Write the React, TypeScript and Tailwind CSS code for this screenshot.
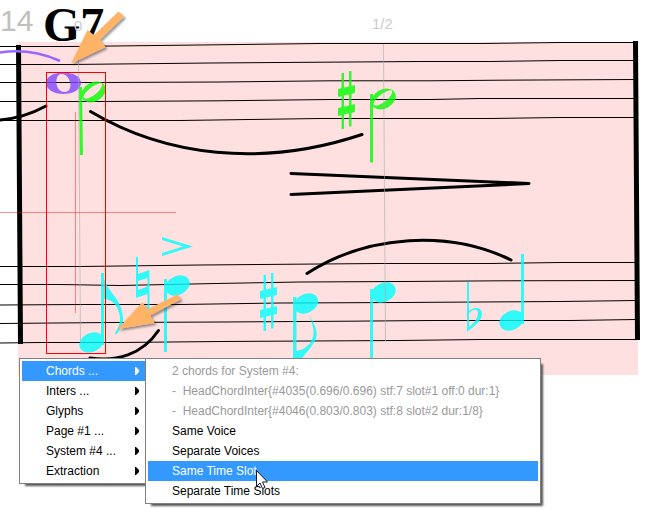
import React from "react";

type StaffLine = string;

const staffLines: StaffLine[] = [
  "M0 46.5H70L200 45L320 43.5H480L560 42.5H636",
  "M0 64.5H70L210 63L350 62L420 61.5H490L560 60.5H636",
  "M0 82.5H100L220 82L330 80.8L430 80.8L500 80.2L636 79.5",
  "M0 101.5H100L220 100.8L330 99.5H430L480 98.5H636",
  "M0 120.5H180L320 118.5H490L560 117.5H636",
  "M0 266.5H80L200 265L380 263.5H490L560 262.5H636",
  "M0 284.5H60L120 285.5L216 283.5L300 282L400 281.5L500 280.8L636 280.5",
  "M0 305L80 304.5H180L280 303L400 302.5L560 301.5L636 300.5",
  "M0 323.5L110 322.5L220 322L350 321.2L430 320.5H570L636 319.5",
  "M0 343L40 342.5H120L220 341.5L400 340.5L480 339.5H636",
];

const curves = [
  "M0 120Q24 118 46 106",
  "M90.500 111.500C165 156 262 168 362 134.500",
  "M307 273.500C368 234 450 230 511 260",
  "M90 358C116 362 142 355 158.500 330.500",
  "M291 173.500L529 183.500L291 194.500",
];

function Sharp({ x, y }: { x: number; y: number }) {
  return (
    <g transform={`translate(${x} ${y})`}>
      <path d="M3.500 2H6V58H3.500ZM11 0H13.500V55.500H11Z" />
      <path d="M0 18L17 14V22L0 26ZM0 37L17 33V41L0 45Z" />
    </g>
  );
}

function Head({ x, y }: { x: number; y: number }) {
  return (
    <ellipse cx={x} cy={y} rx="12.7" ry="9.5" transform={`rotate(-25 ${x} ${y})`} />
  );
}

function HalfHead({ x, y }: { x: number; y: number }) {
  return (
    <g transform={`translate(${x} ${y}) rotate(-28)`}>
      <path
        fillRule="evenodd"
        d="M-13 0A13 9.500 0 1 0 13 0A13 9.500 0 1 0 -13 0ZM-11.500 0.500C-9 -5 8 -7 11.500 -3.500C11 2 -9 6.500 -11.500 0.500Z"
      />
    </g>
  );
}

function Score() {
  return (
    <svg viewBox="0 0 648 375" className="block h-auto w-full" role="img" aria-label="Score, measure 14">
      <defs>
        <filter id="arrowShadow" x="-20%" y="-20%" width="150%" height="150%">
          <feDropShadow dx="2" dy="2" stdDeviation="1.3" floodColor="#000" floodOpacity="0.4" />
        </filter>
      </defs>
      <rect x="18" y="42" width="620" height="333" fill="#ffe0e0" />

      <text x="0" y="31" fontSize="30" fill="#c0c0c0" className="font-['Liberation_Sans',Arial,sans-serif]">14</text>
      <text x="43" y="41" fontSize="48" fontWeight="700" className="font-['Liberation_Serif',serif]">G7</text>
      <g fontSize="15" fill="#cccccc" className="font-['Liberation_Sans',Arial,sans-serif]">
        <text x="74" y="31">0</text>
        <text x="372" y="29">1/2</text>
      </g>

      <g fill="none" stroke="#000">
        {staffLines.map((d) => (
          <path key={d} d={d} />
        ))}
      </g>
      <path d="M16 45H21L23 344H18ZM633 41H638L640 340H635Z" />
      <g fill="none" stroke="#000" strokeWidth="3" strokeLinecap="round" strokeLinejoin="round">
        {curves.map((d) => (
          <path key={d} d={d} />
        ))}
      </g>
      <path d="M0 52.500Q30 48 59 60.500" fill="none" stroke="#9966ff" strokeWidth="2.600" strokeLinecap="round" />

      <g fill="#8047ff" opacity="0.8">
        <path
          fillRule="evenodd"
          d="M46 83C46 76.500 54 72.500 63.500 72.500S81 76.500 81 83S73 94 63.500 94S46 89.500 46 83ZM56.500 80C55.500 86.500 59.500 92 64.500 92C69 92 71.500 88 70 82C68.500 76.500 65 74 61.500 74C58.500 74 57 76.500 56.500 80Z"
        />
      </g>

      <g fill="#00ff00" opacity="0.8">
        <path d="M79 87H82L83 155H80ZM370 94H373V162.500H370Z" />
        <HalfHead x={93.5} y={92} />
        <HalfHead x={383.5} y={99} />
        <Sharp x={338} y={71} />
      </g>

      <g fill="#00ffff" opacity="0.8">
        <path d="M101 273H104V345H101ZM164 279H167V352H164ZM293 297H296.500V365H293ZM370 289H373V365H370ZM521 254H524V324H521Z" />
        <Head x={91.5} y={342.5} />
        <Head x={177.5} y={285.5} />
        <Head x={306} y={303.5} />
        <Head x={383.5} y={292.5} />
        <Head x={511.500} y={320.5} />
        <path d="M103.500 275C105 291 123 298 123 319C123 326 119 332 115.500 335L115 333C119 327 121 321 119.500 314C117 304 111 299 103.500 299Z" />
        <path d="M308.500 315C322 334 316 340 311 347L295 367V351C305 351 313 342 313.500 334C314 327 311 320 308.500 315Z" />
        <path fillRule="evenodd" d="M136 257H138V274L149.500 270V311H147.500V294L136 298ZM138 281V290L147.500 286.500V278Z" />
        <Sharp x={260} y={273} />
        <path fillRule="evenodd" d="M467 282H469V311C474 306.500 482 307 482 314C482 321 474 326 467 332ZM469 313V327C474 323 478 318 478 313C478 308.500 473 308.500 469 313Z" />
        <path d="M162 237L193 246.500L162 256V253L183 246.500L162 240Z" />
      </g>

      <g fill="none">
        <path d="M78.500 60L80.500 342M383.500 44L385.500 341" stroke="#aaaaaa" strokeOpacity="0.6" />
        <path d="M0 212.500H176M75.500 112V313" stroke="#ff0000" strokeOpacity="0.42" />
        <rect x="46.500" y="72.500" width="59" height="281" stroke="#ff0000" />
      </g>

      <g fill="#ffb366" filter="url(#arrowShadow)">
        <path d="M71 63.500L87.500 30L94 35L118.500 11.500L124 16.500L99.500 40L105.500 47Z" />
        <path d="M117.500 329L142.500 302L147 309.500L177.500 294.500L180.500 299.500L150 315.500L154.500 323Z" />
      </g>
    </svg>
  );
}

const mainItems = ["Chords ...", "Inters ...", "Glyphs", "Page #1 ...", "System #4 ...", "Extraction"];

const chordItems = [
  { label: "2 chords for System #4:", disabled: true },
  { label: "-  HeadChordInter{#4035(0.696/0.696) stf:7 slot#1 off:0 dur:1}", disabled: true },
  { label: "-  HeadChordInter{#4046(0.803/0.803) stf:8 slot#2 dur:1/8}", disabled: true },
  { label: "Same Voice", disabled: false },
  { label: "Separate Voices", disabled: false },
  { label: "Same Time Slot", disabled: false },
  { label: "Separate Time Slots", disabled: false },
];

const panel = "border border-[#808080] bg-white shadow-[4px_4px_2px_-2px_#555555]";

function ContextMenu() {
  return (
    <nav
      aria-label="Score actions"
      className="absolute top-[358px] left-[19px] flex items-start font-['Liberation_Sans',Arial,sans-serif] text-[12px] leading-5"
    >
      <ul className={`${panel} w-[126px] border-r-0 py-0.5 pl-0.5`}>
        {mainItems.map((label, i) => (
          <li key={label}>
            <button
              type="button"
              aria-haspopup="menu"
              className={`flex h-5 w-full items-center justify-between pr-1.5 pl-6 ${i === 0 ? "bg-[#3399ff] text-white" : "text-black"}`}
            >
              {label}
              <svg viewBox="0 0 4 8" className="h-2 w-1 fill-current" aria-hidden="true">
                <path d="M0 0H1L4 3V5L1 8H0Z" />
              </svg>
            </button>
          </li>
        ))}
      </ul>
      <div className="relative w-[396px]">
        <ul className={`${panel} p-0.5`}>
          {chordItems.map(({ label, disabled }) => (
            <li key={label}>
              <button
                type="button"
                disabled={disabled}
                className={`block h-5 w-full pl-6 text-left whitespace-pre ${
                  disabled ? "text-[#999999]" : label === "Same Time Slot" ? "bg-[#3399ff] text-white" : "text-black"
                }`}
              >
                {label}
              </button>
            </li>
          ))}
        </ul>
        <svg viewBox="0 0 12 19" className="absolute top-[112px] left-[111px] h-[19px] w-3" aria-hidden="true">
          <path d="M0.500 0.500V16.500L4 13L6.500 18.500L9 17.500L6.500 12H11.500Z" fill="#fff" stroke="#1a1a2e" />
        </svg>
      </div>
    </nav>
  );
}

export default function App() {
  return (
    <main className="relative min-h-screen overflow-hidden bg-white">
      <Score />
      <ContextMenu />
    </main>
  );
}
